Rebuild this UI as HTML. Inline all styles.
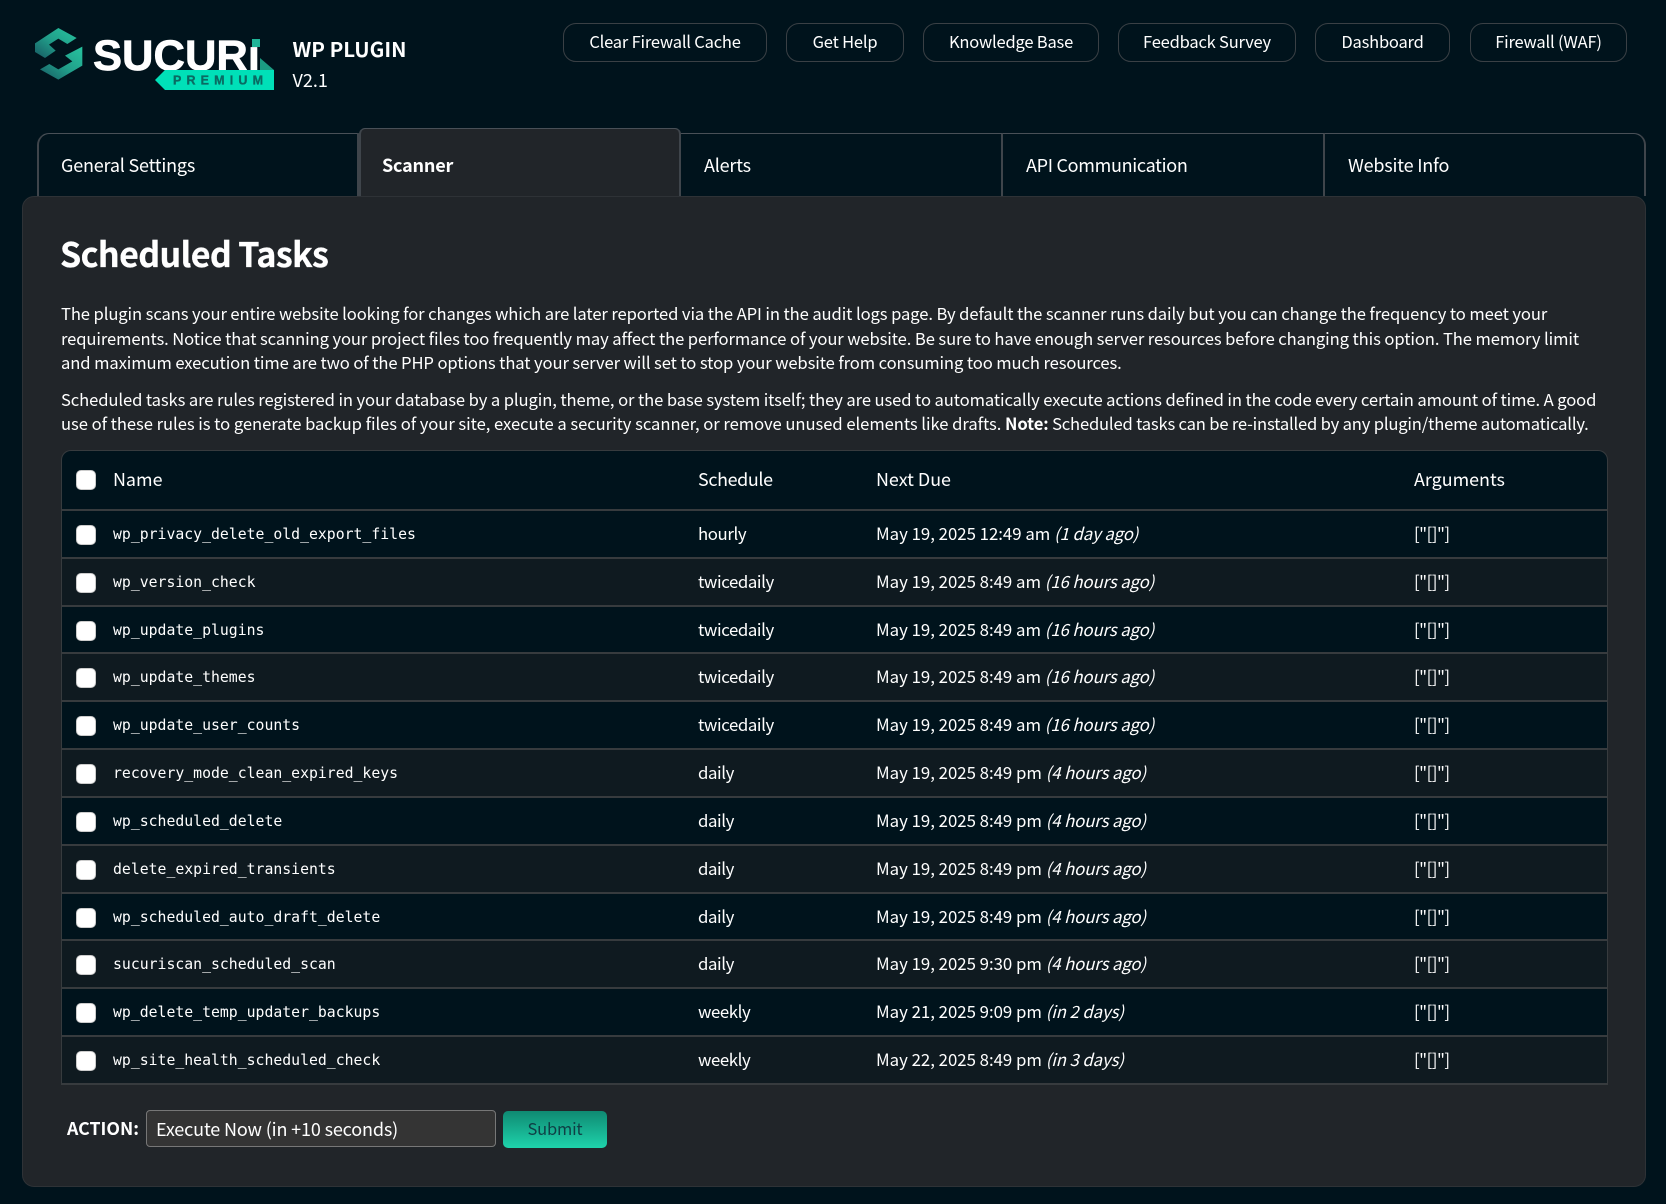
<!DOCTYPE html>
<html lang="en"><head><meta charset="utf-8"><title>Scheduled Tasks</title>
<style>
*{box-sizing:border-box}
html,body{margin:0;padding:0;background:#00131c}
body{width:1666px;height:1204px;position:relative;overflow:hidden;color:#fff;font-family:"Noto Sans CJK JP","Liberation Sans",sans-serif;font-size:16.8px}
.abs{position:absolute;white-space:nowrap}
.btn{position:absolute;top:23px;height:39px;border:1px solid #3a4045;border-radius:13px;line-height:34px;text-align:center;font-size:16.5px;letter-spacing:-.2px}
.tab{position:absolute;top:133px;height:63px;border:2px solid #3f454b;border-top:1px solid #495057;border-bottom:0;border-left-width:0;background:#00131c;line-height:63px;font-size:18px;letter-spacing:-.2px;padding-left:23px}
.panel{position:absolute;left:22px;top:196px;width:1624px;height:991px;background:#212529;border:1px solid #2e3236;border-radius:12px}
.p{position:absolute;left:61px;white-space:nowrap;line-height:24px;font-size:16.6px;letter-spacing:-.1px}
table{position:absolute;left:61px;top:450px;width:1547px;height:634px;border-collapse:separate;border-spacing:0;table-layout:fixed;background:#00131c;border:1.5px solid #373b3e;border-bottom:0;border-right:1px solid #373b3e;border-radius:10px 10px 0 0;overflow:hidden}
th,td{padding:0;font-weight:400;text-align:left;border-bottom:2px solid #373b3e;white-space:nowrap}
th{font-size:17.9px;height:60px}
td{height:47.83px}
tr.e td{background:#0f1a20}
th span.t,td span.t{position:relative;top:-1px;display:inline-block}
td.s span.t{letter-spacing:-.4px}
td.a span.t{letter-spacing:-.5px}
td.m{font-family:"DejaVu Sans Mono","Liberation Mono",monospace;font-size:14.8px}
td.m span.t{top:.5px}
.c{display:block;width:20px;height:20px;background:#fff;border:1px solid #ccc;border-radius:5px;margin-left:14px}
td .c{position:relative;top:1px}
i{font-style:italic;letter-spacing:-.12px}
</style></head><body>
<svg class="abs" style="left:0;top:0" width="300" height="100" viewBox="0 0 300 100">
<defs><linearGradient id="g" x1="0" y1="1" x2="1" y2="0"><stop offset="0" stop-color="#175a63"/><stop offset=".5" stop-color="#219f8a"/><stop offset="1" stop-color="#27c39f"/></linearGradient></defs>
<g transform="translate(30,24) scale(.3333)" fill="url(#g)">
<path d="M15 58 85 12 140 42 112 60 85 44 57 62 77 80 45 102 15 84Z"/>
<path d="M157 68V125L85 167 30 136 58 120 85 136 127 112 105 95Z"/>
</g>
<text x="93" y="70" font-family="Liberation Sans,sans-serif" font-weight="700" font-size="43" fill="#fff" stroke="#fff" stroke-width=".7" textLength="167" lengthAdjust="spacingAndGlyphs">SUCURi</text>
<path d="M260 58 274 70H260Z" fill="#1b9b82"/>
<rect x="250" y="36" width="12" height="11" fill="#00131c"/>
<rect x="252" y="39" width="8" height="8" fill="#1fb598"/>
<path d="M165 70H274V90H165L155 80Z" fill="#00e0b8"/>
<text x="173" y="84.5" font-family="Liberation Sans,sans-serif" font-weight="700" font-size="12.5" fill="#0a6a62" stroke="#0a6a62" stroke-width=".3" textLength="90">PREMIUM</text>
</svg>
<div class="abs" style="left:292.5px;top:34px;font-size:20.5px;font-weight:700;line-height:28px">WP PLUGIN</div>
<div class="abs" style="left:292.5px;top:66px;font-size:18px;line-height:28px">V2.1</div>

<div class="btn" style="left:563px;width:204px">Clear Firewall Cache</div>
<div class="btn" style="left:786px;width:118px">Get Help</div>
<div class="btn" style="left:923px;width:176px">Knowledge Base</div>
<div class="btn" style="left:1118px;width:178px">Feedback Survey</div>
<div class="btn" style="left:1315px;width:135px">Dashboard</div>
<div class="btn" style="left:1470px;width:157px">Firewall (WAF)</div>

<div class="tab" style="left:37px;width:322px;border-left-width:2px;padding-left:22px;border-top-left-radius:12px">General Settings</div>
<div class="tab" style="left:681px;width:322px">Alerts</div>
<div class="tab" style="left:1003px;width:322px;letter-spacing:-.3px">API Communication</div>
<div class="tab" style="left:1325px;width:321px;border-top-right-radius:12px">Website Info</div>
<div class="tab" style="left:359px;width:322px;top:128px;height:68px;line-height:73px;background:#212529;border-left-width:2px;padding-left:21px;border-radius:6px 6px 0 0;font-weight:700">Scanner</div>

<div class="panel"></div>
<div class="abs" style="left:60px;top:227px;font-size:34px;font-weight:700;letter-spacing:-.6px;line-height:52px;-webkit-text-stroke:.3px #fff">Scheduled Tasks</div>
<div class="p" style="top:301px">The plugin scans your entire website looking for changes which are later reported via the API in the audit logs page. By default the scanner runs daily but you can change the frequency to meet your</div>
<div class="p" style="top:326px">requirements. Notice that scanning your project files too frequently may affect the performance of your website. Be sure to have enough server resources before changing this option. The memory limit</div>
<div class="p" style="top:350px">and maximum execution time are two of the PHP options that your server will set to stop your website from consuming too much resources.</div>
<div class="p" style="top:387px">Scheduled tasks are rules registered in your database by a plugin, theme, or the base system itself; they are used to automatically execute actions defined in the code every certain amount of time. A good</div>
<div class="p" style="top:411px"><span style="letter-spacing:-.04px">use of these rules is to generate backup files of your site, execute a security scanner, or remove unused elements like drafts. </span><b>Note:</b><span style="letter-spacing:-.19px"> Scheduled tasks can be re-installed by any plugin/theme automatically.</span></div>

<table>
<colgroup><col style="width:51px"><col style="width:585px"><col style="width:178px"><col style="width:538px"><col></colgroup>
<tr><th><span class="c"></span></th><th><span class="t">Name</span></th><th><span class="t" style="letter-spacing:-.35px">Schedule</span></th><th><span class="t">Next Due</span></th><th><span class="t">Arguments</span></th></tr>
<tr><td><span class="c"></span></td><td class="m"><span class="t">wp_privacy_delete_old_export_files</span></td><td class="s"><span class="t">hourly</span></td><td><span class="t">May 19, 2025 12:49 am <i>(1 day ago)</i></span></td><td class="a"><span class="t">["[]"]</span></td></tr>
<tr class="e"><td><span class="c"></span></td><td class="m"><span class="t">wp_version_check</span></td><td class="s"><span class="t">twicedaily</span></td><td><span class="t">May 19, 2025 8:49 am <i>(16 hours ago)</i></span></td><td class="a"><span class="t">["[]"]</span></td></tr>
<tr><td><span class="c"></span></td><td class="m"><span class="t">wp_update_plugins</span></td><td class="s"><span class="t">twicedaily</span></td><td><span class="t">May 19, 2025 8:49 am <i>(16 hours ago)</i></span></td><td class="a"><span class="t">["[]"]</span></td></tr>
<tr class="e"><td><span class="c"></span></td><td class="m"><span class="t">wp_update_themes</span></td><td class="s"><span class="t">twicedaily</span></td><td><span class="t">May 19, 2025 8:49 am <i>(16 hours ago)</i></span></td><td class="a"><span class="t">["[]"]</span></td></tr>
<tr><td><span class="c"></span></td><td class="m"><span class="t">wp_update_user_counts</span></td><td class="s"><span class="t">twicedaily</span></td><td><span class="t">May 19, 2025 8:49 am <i>(16 hours ago)</i></span></td><td class="a"><span class="t">["[]"]</span></td></tr>
<tr class="e"><td><span class="c"></span></td><td class="m"><span class="t">recovery_mode_clean_expired_keys</span></td><td class="s"><span class="t">daily</span></td><td><span class="t">May 19, 2025 8:49 pm <i>(4 hours ago)</i></span></td><td class="a"><span class="t">["[]"]</span></td></tr>
<tr><td><span class="c"></span></td><td class="m"><span class="t">wp_scheduled_delete</span></td><td class="s"><span class="t">daily</span></td><td><span class="t">May 19, 2025 8:49 pm <i>(4 hours ago)</i></span></td><td class="a"><span class="t">["[]"]</span></td></tr>
<tr class="e"><td><span class="c"></span></td><td class="m"><span class="t">delete_expired_transients</span></td><td class="s"><span class="t">daily</span></td><td><span class="t">May 19, 2025 8:49 pm <i>(4 hours ago)</i></span></td><td class="a"><span class="t">["[]"]</span></td></tr>
<tr><td><span class="c"></span></td><td class="m"><span class="t">wp_scheduled_auto_draft_delete</span></td><td class="s"><span class="t">daily</span></td><td><span class="t">May 19, 2025 8:49 pm <i>(4 hours ago)</i></span></td><td class="a"><span class="t">["[]"]</span></td></tr>
<tr class="e"><td><span class="c"></span></td><td class="m"><span class="t">sucuriscan_scheduled_scan</span></td><td class="s"><span class="t">daily</span></td><td><span class="t">May 19, 2025 9:30 pm <i>(4 hours ago)</i></span></td><td class="a"><span class="t">["[]"]</span></td></tr>
<tr><td><span class="c"></span></td><td class="m"><span class="t">wp_delete_temp_updater_backups</span></td><td class="s"><span class="t">weekly</span></td><td><span class="t">May 21, 2025 9:09 pm <i>(in 2 days)</i></span></td><td class="a"><span class="t">["[]"]</span></td></tr>
<tr class="e"><td><span class="c"></span></td><td class="m"><span class="t">wp_site_health_scheduled_check</span></td><td class="s"><span class="t">weekly</span></td><td><span class="t">May 22, 2025 8:49 pm <i>(in 3 days)</i></span></td><td class="a"><span class="t">["[]"]</span></td></tr>
</table>

<div class="abs" style="left:67px;top:1115px;font-weight:700;font-size:17.7px;line-height:26px">ACTION:</div>
<div class="abs" style="left:146px;top:1110px;width:350px;height:37px;background:#343434;border:1px solid #777;border-radius:4px;padding-left:9px;line-height:36px;font-size:18px;letter-spacing:-.15px">Execute Now (in +10 seconds)</div>
<div class="abs" style="left:503px;top:1111px;width:104px;height:37px;border-radius:5px;background:linear-gradient(#0f8a72,#1ed3ab);color:#0f3f45;text-align:center;line-height:35px;font-size:16.5px;letter-spacing:-.2px">Submit</div>
</body></html>
